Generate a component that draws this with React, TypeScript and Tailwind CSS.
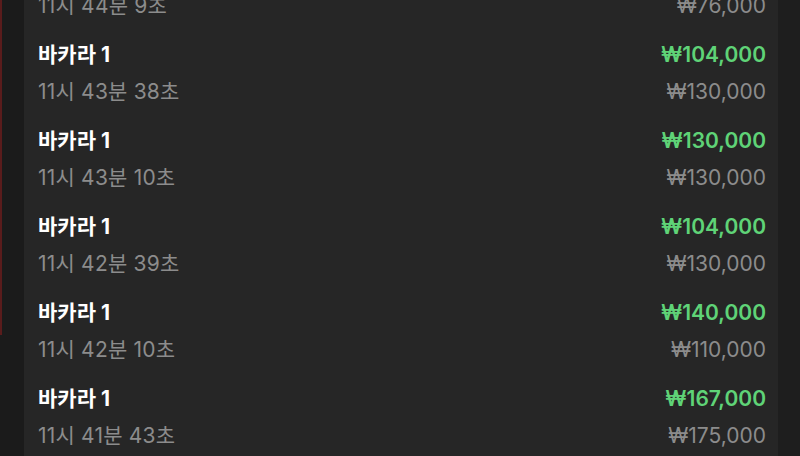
const ROWS = [
  { title: "바카라 1", time: "11시 44분 9초", win: "₩0", bet: "₩76,000" },
  { title: "바카라 1", time: "11시 43분 38초", win: "₩104,000", bet: "₩130,000" },
  { title: "바카라 1", time: "11시 43분 10초", win: "₩130,000", bet: "₩130,000" },
  { title: "바카라 1", time: "11시 42분 39초", win: "₩104,000", bet: "₩130,000" },
  { title: "바카라 1", time: "11시 42분 10초", win: "₩140,000", bet: "₩110,000" },
  { title: "바카라 1", time: "11시 41분 43초", win: "₩167,000", bet: "₩175,000" },
];

export default function App() {
  return (
    <div
      className="flex h-[456px] w-[800px] overflow-hidden bg-[#1c1c1c]"
      style={{ fontFamily: 'Inter, "Noto Sans CJK KR", sans-serif' }}
    >
      <div className="flex w-6 shrink-0 flex-col bg-[#1b1b1b]">
        <div className="h-[335px] w-[2px] bg-[#5a1c1c]" />
      </div>
      <div className="w-[754px] shrink-0 overflow-hidden bg-[#262626]">
        <ul className="mt-[-49px] px-[14px] pr-[12px]">
          {ROWS.map((row, i) => (
            <li key={i} className="pb-3">
              <div className="flex h-9 items-center justify-between">
                <span className="text-[21px] font-bold text-white">{row.title}</span>
                <span className="text-[21px] font-semibold text-[#5fd377]">{row.win}</span>
              </div>
              <div className="flex h-[38px] items-center justify-between">
                <span className="text-[21px] tracking-[0.2px] text-[#8c8c8c]">{row.time}</span>
                <span className="text-[21px] text-[#8c8c8c]">{row.bet}</span>
              </div>
            </li>
          ))}
        </ul>
      </div>
      <div className="flex-1 bg-[#1e1e1e]" />
    </div>
  );
}
